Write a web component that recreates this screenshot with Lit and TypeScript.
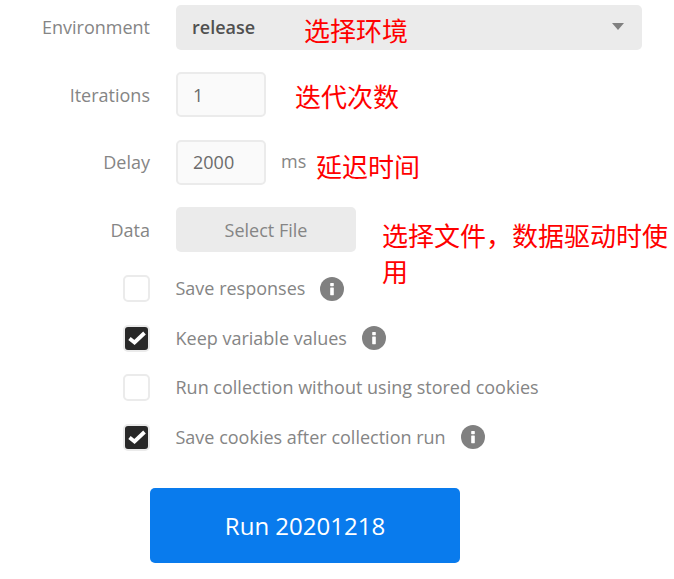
import { LitElement, html, css, svg } from 'lit';
import { customElement } from 'lit/decorators.js';

const checkIcon = svg`<svg class="tick" width="18" height="14" viewBox="0 0 18 14"><path d="M1.5 7.5 L6.5 11.5 L16.5 2" fill="none" stroke="#fff" stroke-width="3.8"/></svg>`;

const infoIcon = html`<svg class="info" width="24" height="24" viewBox="0 0 24 24">
  <circle cx="12" cy="12" r="12" fill="#808080"/>
  <rect x="10.2" y="6" width="3.6" height="3.2" rx="0.6" fill="#fff"/>
  <rect x="10.2" y="10.6" width="3.6" height="7.6" rx="0.4" fill="#fff"/>
</svg>`;

const options = [
  { label: 'Save responses', checked: false, info: true },
  { label: 'Keep variable values', checked: true, info: true },
  { label: 'Run collection without using stored cookies', checked: false, info: false },
  { label: 'Save cookies after collection run', checked: true, info: true },
];

@customElement('app-root')
export class AppRoot extends LitElement {
  static styles = css`
    :host {
      display: block;
      position: relative;
      width: 674px;
      height: 579px;
      background: #fff;
      font-family: 'Open Sans', sans-serif;
      font-size: 18px;
      color: #858585;
      overflow: hidden;
    }

    .form {
      display: flex;
      flex-direction: column;
      padding-top: 5px;
    }

    .row {
      display: flex;
      align-items: center;
      height: 45px;
      margin-bottom: 22px;
      box-sizing: border-box;
    }

    .row.wide {
      margin-bottom: 23px;
    }

    .label {
      width: 150px;
      text-align: right;
      margin-right: 26px;
    }

    .raised .label {
      margin-top: -2px;
    }

    .select {
      display: flex;
      align-items: center;
      justify-content: space-between;
      width: 466px;
      height: 45px;
      box-sizing: border-box;
      padding: 0 18px 2px 16px;
      background: #ebebeb;
      border-radius: 5px;
      color: #505050;
      font-weight: 600;
    }

    .caret {
      width: 0;
      height: 0;
      border-left: 6px solid transparent;
      border-right: 6px solid transparent;
      border-top: 7px solid #808080;
    }

    .input {
      display: flex;
      align-items: center;
      width: 90px;
      height: 45px;
      box-sizing: border-box;
      padding-left: 15px;
      background: #fafafa;
      border: 2px solid #ebebeb;
      border-radius: 5px;
      color: #6b6b6b;
    }

    .raised .input {
      padding-bottom: 2px;
    }

    .unit {
      margin-left: 15px;
      margin-top: -3px;
    }

    .file {
      display: flex;
      align-items: center;
      justify-content: center;
      width: 180px;
      height: 45px;
      background: #ebebeb;
      border-radius: 5px;
    }

    .options {
      display: flex;
      flex-direction: column;
      gap: 22.5px;
      padding-left: 123px;
    }

    .option {
      display: flex;
      align-items: center;
      height: 27px;
    }

    .option-text {
      margin-top: -1px;
      margin-left: -0.5px;
    }

    .box {
      display: flex;
      align-items: center;
      justify-content: center;
      width: 27px;
      height: 27px;
      box-sizing: border-box;
      margin-right: 26px;
      background: #fff;
      border: 2px solid #ebebeb;
      border-radius: 5px;
    }

    .box.on {
      background: #282828;
    }

    .tick {
      flex: none;
    }

    .info {
      margin-left: 15px;
    }

    .run {
      display: flex;
      align-items: center;
      justify-content: center;
      width: 310px;
      height: 75px;
      margin: 37px 0 0 150px;
      background: #097bed;
      border-radius: 5px;
      color: #fff;
      font-size: 24px;
    }

    .note {
      position: absolute;
      color: #ff0000;
      font-family: 'Noto Sans CJK SC', sans-serif;
      font-size: 26px;
      line-height: 36px;
    }
  `;

  render() {
    return html`
      <div class="form">
        <div class="row raised">
          <div class="label">Environment</div>
          <div class="select">release<span class="caret"></span></div>
        </div>
        <div class="row wide">
          <div class="label">Iterations</div>
          <div class="input">1</div>
        </div>
        <div class="row raised">
          <div class="label">Delay</div>
          <div class="input">2000</div>
          <div class="unit">ms</div>
        </div>
        <div class="row wide">
          <div class="label">Data</div>
          <div class="file">Select File</div>
        </div>
        <div class="options">
          ${options.map(
            (o) => html`
              <div class="option">
                <span class="box ${o.checked ? 'on' : ''}">${o.checked ? checkIcon : ''}</span>
                <span class="option-text">${o.label}</span>
                ${o.info ? infoIcon : ''}
              </div>
            `
          )}
        </div>
        <div class="run">Run 20201218</div>
      </div>
      <div class="note" style="left:304px;top:12px">选择环境</div>
      <div class="note" style="left:295px;top:78px">迭代次数</div>
      <div class="note" style="left:316px;top:148px">延迟时间</div>
      <div class="note" style="left:382px;top:217px;width:290px">选择文件，数据驱动时使用</div>
    `;
  }
}
